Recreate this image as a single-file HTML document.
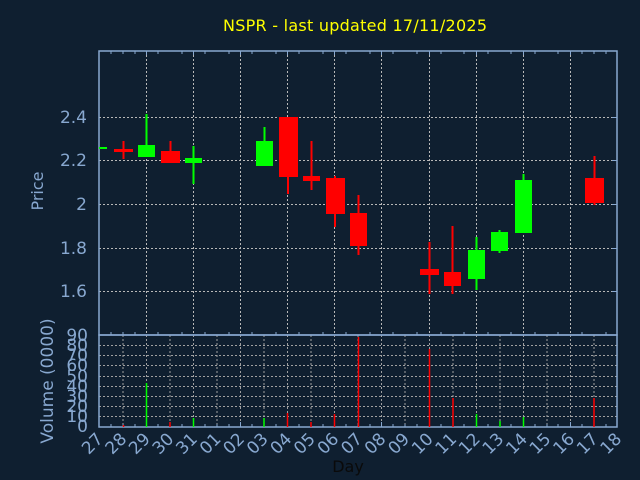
<!DOCTYPE html>
<html><head><meta charset="utf-8"><style>
html,body{margin:0;padding:0;background:#0f1f30;}
svg{display:block;font-family:"DejaVu Sans","Liberation Sans",sans-serif;}
</style></head><body>
<svg width="640" height="480" viewBox="0 0 640 480" xmlns="http://www.w3.org/2000/svg">
<rect width="640" height="480" fill="#0f1f30"/>
<text x="355" y="31" fill="#ffff00" font-size="16" text-anchor="middle" textLength="264">NSPR - last updated 17/11/2025</text>
<g stroke="#b8b8b8" stroke-width="1" stroke-dasharray="2,2">
<line x1="99" y1="117.5" x2="617" y2="117.5"/>
<line x1="99" y1="160.5" x2="617" y2="160.5"/>
<line x1="99" y1="204.5" x2="617" y2="204.5"/>
<line x1="99" y1="248.5" x2="617" y2="248.5"/>
<line x1="99" y1="291.5" x2="617" y2="291.5"/>
<line x1="146.5" y1="51" x2="146.5" y2="335"/>
<line x1="193.5" y1="51" x2="193.5" y2="335"/>
<line x1="240.5" y1="51" x2="240.5" y2="335"/>
<line x1="287.5" y1="51" x2="287.5" y2="335"/>
<line x1="334.5" y1="51" x2="334.5" y2="335"/>
<line x1="381.5" y1="51" x2="381.5" y2="335"/>
<line x1="429.5" y1="51" x2="429.5" y2="335"/>
<line x1="476.5" y1="51" x2="476.5" y2="335"/>
<line x1="523.5" y1="51" x2="523.5" y2="335"/>
<line x1="570.5" y1="51" x2="570.5" y2="335"/>
</g>
<g stroke="#a0a0a0" stroke-width="1" stroke-dasharray="2,2">
<line x1="99" y1="345.5" x2="617" y2="345.5"/>
<line x1="99" y1="355.5" x2="617" y2="355.5"/>
<line x1="99" y1="365.5" x2="617" y2="365.5"/>
<line x1="99" y1="376.5" x2="617" y2="376.5"/>
<line x1="99" y1="386.5" x2="617" y2="386.5"/>
<line x1="99" y1="396.5" x2="617" y2="396.5"/>
<line x1="99" y1="406.5" x2="617" y2="406.5"/>
<line x1="99" y1="416.5" x2="617" y2="416.5"/>
<line x1="123" y1="335" x2="123" y2="427"/><line x1="146.5" y1="335" x2="146.5" y2="427"/><line x1="170" y1="335" x2="170" y2="427"/><line x1="193.5" y1="335" x2="193.5" y2="427"/><line x1="217" y1="335" x2="217" y2="427"/><line x1="240.5" y1="335" x2="240.5" y2="427"/><line x1="264" y1="335" x2="264" y2="427"/><line x1="287.5" y1="335" x2="287.5" y2="427"/><line x1="311" y1="335" x2="311" y2="427"/><line x1="334.5" y1="335" x2="334.5" y2="427"/><line x1="358" y1="335" x2="358" y2="427"/><line x1="381.5" y1="335" x2="381.5" y2="427"/><line x1="405" y1="335" x2="405" y2="427"/><line x1="429.5" y1="335" x2="429.5" y2="427"/><line x1="453" y1="335" x2="453" y2="427"/><line x1="476.5" y1="335" x2="476.5" y2="427"/><line x1="500" y1="335" x2="500" y2="427"/><line x1="523.5" y1="335" x2="523.5" y2="427"/><line x1="547" y1="335" x2="547" y2="427"/><line x1="570.5" y1="335" x2="570.5" y2="427"/><line x1="594" y1="335" x2="594" y2="427"/>
</g>
<g stroke="#88a8d0" stroke-width="1.5" fill="none">
<rect x="99" y="51" width="518" height="284"/>
<rect x="99" y="335" width="518" height="92"/>
</g>
<!-- ticks -->
<g stroke="#88a8d0" stroke-width="1">
<path d="M111,51v3M123,51v3M135,51v3M158,51v3M182,51v3M205,51v3M229,51v3M252,51v3M276,51v3M299,51v3M323,51v3M346,51v3M370,51v3M393,51v3M417,51v3M441,51v3M464,51v3M488,51v3M511,51v3M535,51v3M558,51v3M582,51v3M594,51v3M606,51v3M146.5,51v4M193.5,51v4M240.5,51v4M287.5,51v4M334.5,51v4M381.5,51v4M429.5,51v4M476.5,51v4M523.5,51v4M570.5,51v4"/>
<path d="M111,335v-3M123,335v-3M135,335v-3M158,335v-3M182,335v-3M205,335v-3M229,335v-3M252,335v-3M276,335v-3M299,335v-3M323,335v-3M346,335v-3M370,335v-3M393,335v-3M417,335v-3M441,335v-3M464,335v-3M488,335v-3M511,335v-3M535,335v-3M558,335v-3M582,335v-3M606,335v-3"/>
<path d="M111,427v-3M123,427v-3M135,427v-3M158,427v-3M170,427v-3M182,427v-3M205,427v-3M217,427v-3M229,427v-3M252,427v-3M264,427v-3M276,427v-3M299,427v-3M311,427v-3M323,427v-3M346,427v-3M358,427v-3M370,427v-3M393,427v-3M405,427v-3M417,427v-3M441,427v-3M453,427v-3M464,427v-3M488,427v-3M500,427v-3M511,427v-3M535,427v-3M547,427v-3M558,427v-3M582,427v-3M594,427v-3M606,427v-3M146.5,427v-5M193.5,427v-5M240.5,427v-5M287.5,427v-5M334.5,427v-5M381.5,427v-5M429.5,427v-5M476.5,427v-5M523.5,427v-5M570.5,427v-5"/>
<path d="M612,117.5h5M612,160.5h5M612,204.5h5M612,248.5h5M612,291.5h5"/>
</g>
<g stroke-width="2">
<rect x="99" y="147" width="8" height="2" fill="#00ff00"/>
<line x1="123.5" y1="141" x2="123.5" y2="159" stroke="#ff0000"/><rect x="114" y="149" width="19" height="3" fill="#ff0000"/>
<line x1="146.5" y1="114" x2="146.5" y2="157" stroke="#00ff00"/><rect x="138" y="145" width="17" height="12" fill="#00ff00"/>
<line x1="170.5" y1="141" x2="170.5" y2="151" stroke="#ff0000"/><rect x="161" y="151" width="19" height="12" fill="#ff0000"/>
<line x1="193.5" y1="146" x2="193.5" y2="184" stroke="#00ff00"/><rect x="185" y="158" width="17" height="5" fill="#00ff00"/>
<line x1="264.5" y1="127" x2="264.5" y2="141" stroke="#00ff00"/><rect x="256" y="141" width="17" height="25" fill="#00ff00"/>
<line x1="288" y1="117" x2="288" y2="194" stroke="#ff0000"/><rect x="279" y="117" width="19" height="60" fill="#ff0000"/>
<line x1="311.5" y1="141" x2="311.5" y2="190" stroke="#ff0000"/><rect x="303" y="176" width="17" height="5" fill="#ff0000"/>
<line x1="335" y1="176" x2="335" y2="227" stroke="#ff0000"/><rect x="326" y="178" width="19" height="36" fill="#ff0000"/>
<line x1="358.5" y1="195" x2="358.5" y2="255" stroke="#ff0000"/><rect x="350" y="213" width="17" height="33" fill="#ff0000"/>
<line x1="429.5" y1="242" x2="429.5" y2="294" stroke="#ff0000"/><rect x="420" y="269" width="19" height="6" fill="#ff0000"/>
<line x1="452.5" y1="226" x2="452.5" y2="294" stroke="#ff0000"/><rect x="444" y="272" width="17" height="14" fill="#ff0000"/>
<line x1="476.5" y1="237" x2="476.5" y2="290" stroke="#00ff00"/><rect x="468" y="250" width="17" height="29" fill="#00ff00"/>
<line x1="499.5" y1="230" x2="499.5" y2="253" stroke="#00ff00"/><rect x="491" y="232" width="17" height="19" fill="#00ff00"/>
<line x1="523.5" y1="174" x2="523.5" y2="233" stroke="#00ff00"/><rect x="515" y="180" width="17" height="53" fill="#00ff00"/>
<line x1="594.5" y1="156" x2="594.5" y2="205" stroke="#ff0000"/><rect x="585" y="178" width="19" height="25" fill="#ff0000"/>
</g>
<g stroke-width="1.5">
<line x1="123.5" y1="425" x2="123.5" y2="427" stroke="#ff0000"/>
<line x1="146.5" y1="383" x2="146.5" y2="427" stroke="#00ff00"/>
<line x1="170" y1="422" x2="170" y2="427" stroke="#ff0000"/>
<line x1="193.5" y1="418" x2="193.5" y2="427" stroke="#00ff00"/>
<line x1="264" y1="418" x2="264" y2="427" stroke="#00ff00"/>
<line x1="287.5" y1="413" x2="287.5" y2="427" stroke="#ff0000"/>
<line x1="311" y1="422" x2="311" y2="427" stroke="#ff0000"/>
<line x1="334.5" y1="414" x2="334.5" y2="427" stroke="#ff0000"/>
<line x1="358.5" y1="337" x2="358.5" y2="427" stroke="#ff0000"/>
<line x1="429.5" y1="349" x2="429.5" y2="427" stroke="#ff0000"/>
<line x1="453" y1="398" x2="453" y2="427" stroke="#ff0000"/>
<line x1="476.5" y1="414" x2="476.5" y2="427" stroke="#00ff00"/>
<line x1="500" y1="421" x2="500" y2="427" stroke="#00ff00"/>
<line x1="523.5" y1="417" x2="523.5" y2="427" stroke="#00ff00"/>
<line x1="594" y1="398" x2="594" y2="427" stroke="#ff0000"/>
</g>
<g fill="#88a8d0" font-size="17" text-anchor="end">
<text x="87" y="123">2.4</text>
<text x="87" y="166">2.2</text>
<text x="87" y="210">2</text>
<text x="87" y="254">1.8</text>
<text x="87" y="297">1.6</text>
<text x="88" y="341">90</text><text x="88" y="351">80</text><text x="88" y="361">70</text><text x="88" y="371">60</text><text x="88" y="382">50</text><text x="88" y="392">40</text><text x="88" y="402">30</text><text x="88" y="412">20</text><text x="88" y="422">10</text><text x="88" y="432">0</text>
</g>
<text transform="translate(43,191) rotate(-90)" fill="#88a8d0" font-size="16" text-anchor="middle">Price</text>
<text transform="translate(53,381) rotate(-90)" fill="#88a8d0" font-size="17" text-anchor="middle">Volume (0000)</text>
<g fill="#88a8d0" font-size="17" text-anchor="end">
<text transform="translate(104,440) rotate(-45)">27</text>
<text transform="translate(127.6,440) rotate(-45)">28</text>
<text transform="translate(151.1,440) rotate(-45)">29</text>
<text transform="translate(174.7,440) rotate(-45)">30</text>
<text transform="translate(198.3,440) rotate(-45)">31</text>
<text transform="translate(221.9,440) rotate(-45)">01</text>
<text transform="translate(245.4,440) rotate(-45)">02</text>
<text transform="translate(269,440) rotate(-45)">03</text>
<text transform="translate(292.6,440) rotate(-45)">04</text>
<text transform="translate(316.1,440) rotate(-45)">05</text>
<text transform="translate(339.7,440) rotate(-45)">06</text>
<text transform="translate(363.3,440) rotate(-45)">07</text>
<text transform="translate(386.8,440) rotate(-45)">08</text>
<text transform="translate(410.4,440) rotate(-45)">09</text>
<text transform="translate(434,440) rotate(-45)">10</text>
<text transform="translate(457.6,440) rotate(-45)">11</text>
<text transform="translate(481.1,440) rotate(-45)">12</text>
<text transform="translate(504.7,440) rotate(-45)">13</text>
<text transform="translate(528.3,440) rotate(-45)">14</text>
<text transform="translate(551.8,440) rotate(-45)">15</text>
<text transform="translate(575.4,440) rotate(-45)">16</text>
<text transform="translate(599,440) rotate(-45)">17</text>
<text transform="translate(622.5,440) rotate(-45)">18</text>
</g>
<text x="348" y="472" fill="#0a0a0a" font-size="16" text-anchor="middle">Day</text>
</svg>
</body></html>
